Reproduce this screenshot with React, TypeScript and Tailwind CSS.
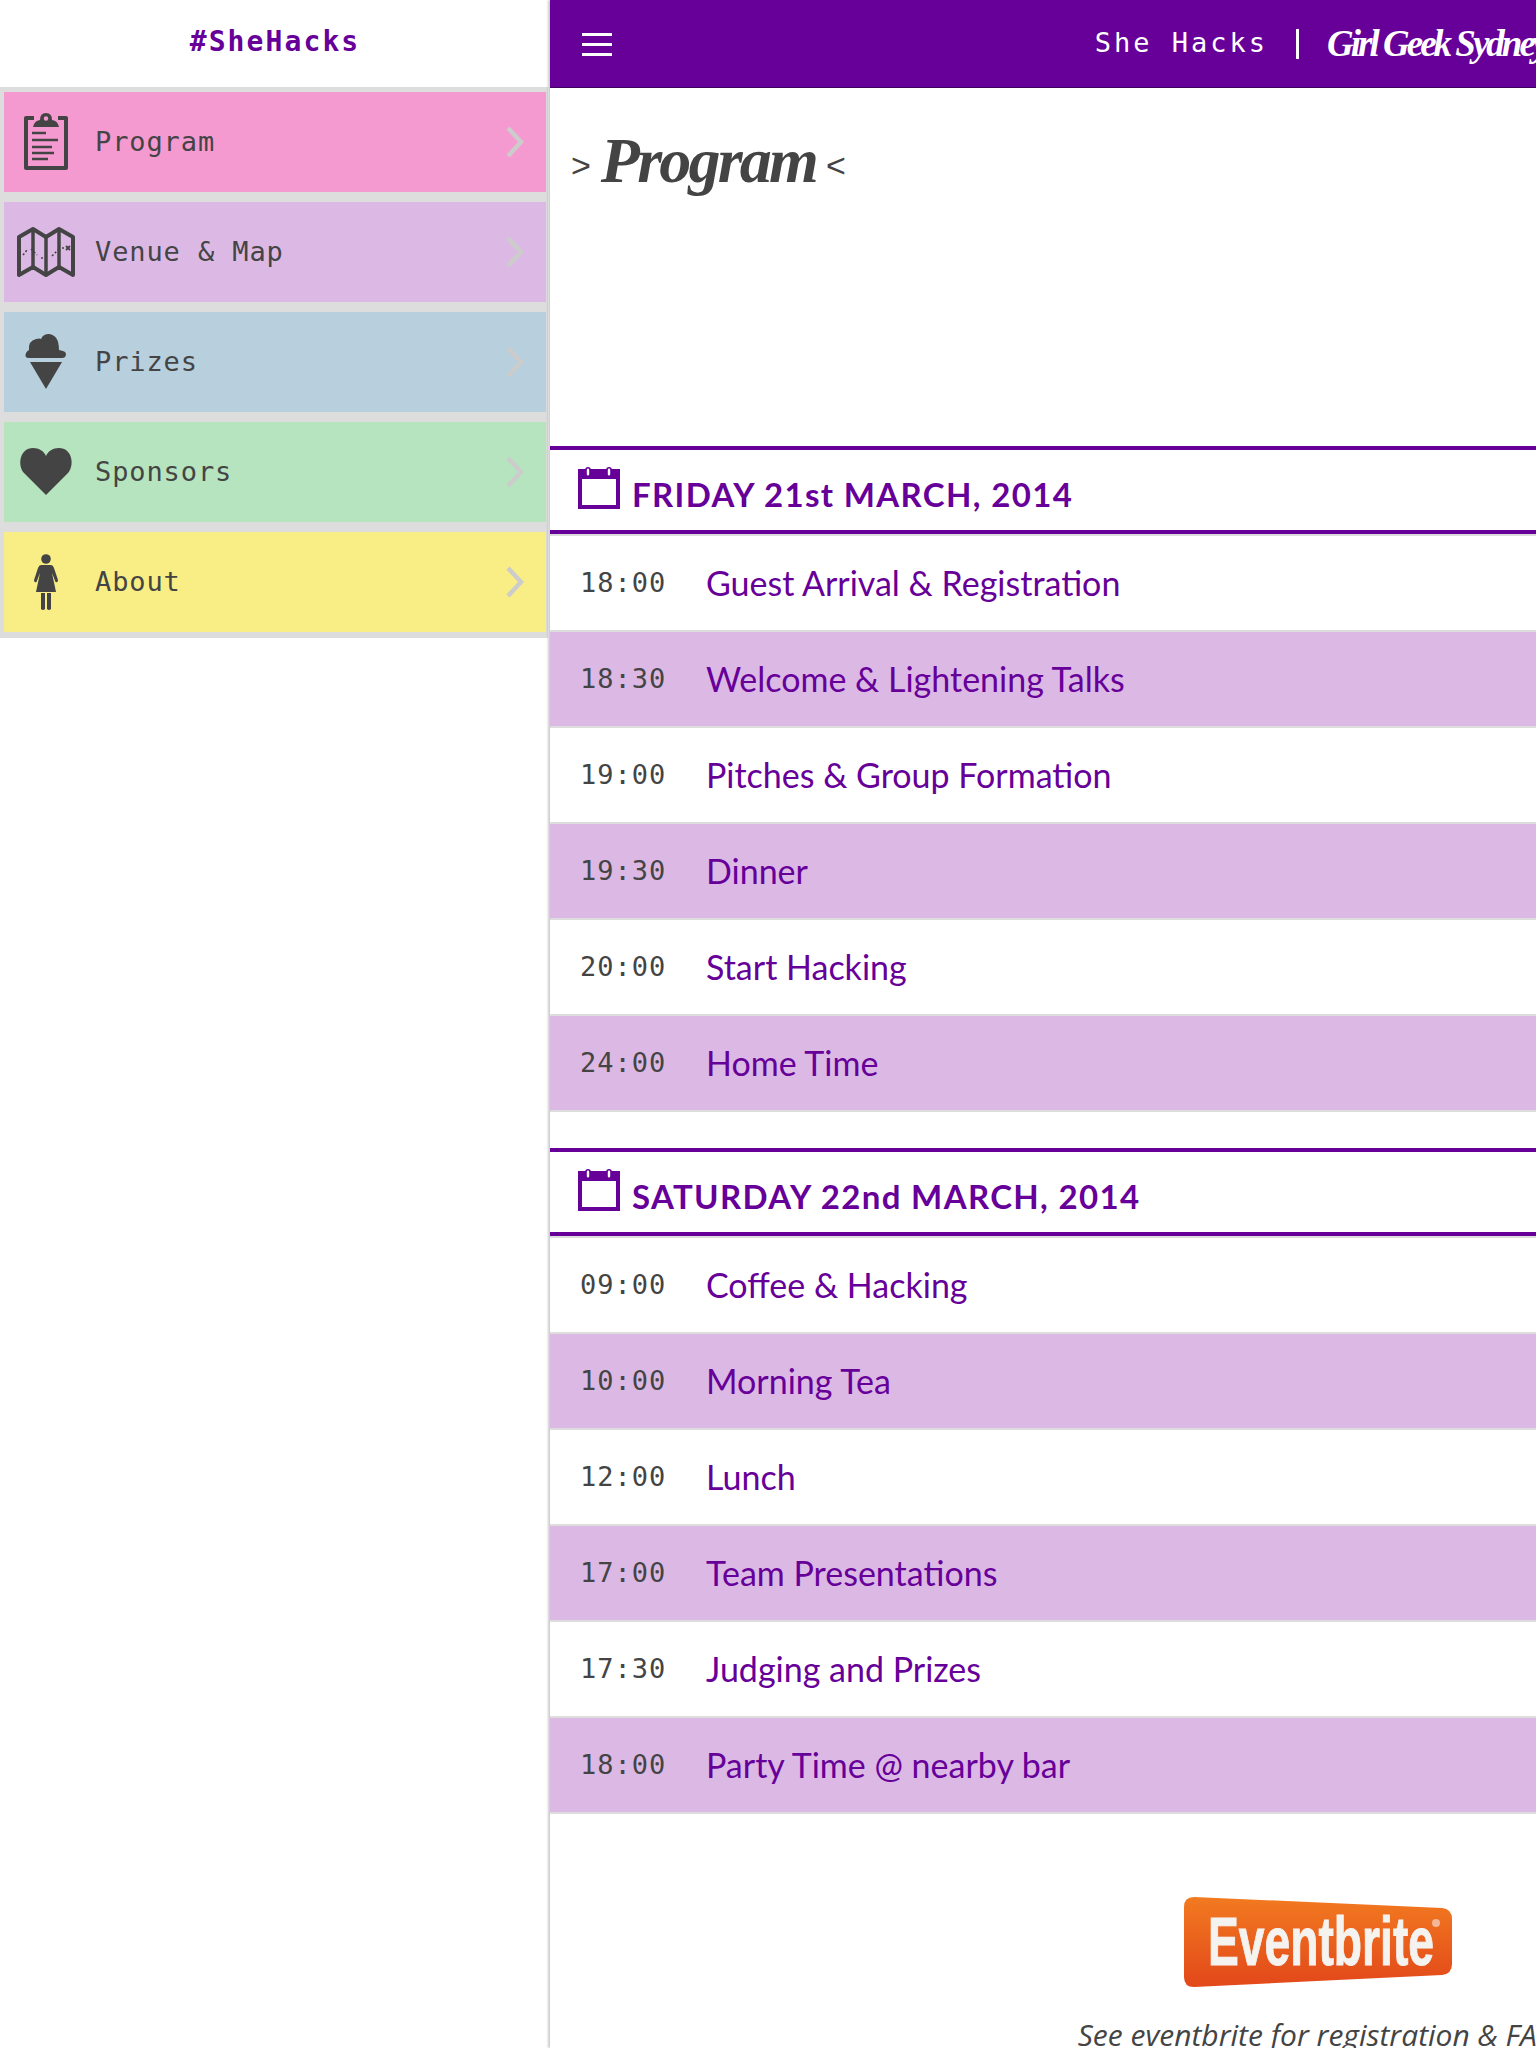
const MONO = "font-['DejaVu_Sans_Mono',monospace]";

const friday = [
    ['18:00', 'Guest Arrival & Registration'],
    ['18:30', 'Welcome & Lightening Talks'],
    ['19:00', 'Pitches & Group Formation'],
    ['19:30', 'Dinner'],
    ['20:00', 'Start Hacking'],
    ['24:00', 'Home Time'],
];

const saturday = [
    ['09:00', 'Coffee & Hacking'],
    ['10:00', 'Morning Tea'],
    ['12:00', 'Lunch'],
    ['17:00', 'Team Presentations'],
    ['17:30', 'Judging and Prizes'],
    ['18:00', 'Party Time @ nearby bar'],
];

function ClipboardIcon() {
    return (
        <svg width="64" height="64" viewBox="0 0 64 64" fill="none" stroke="#444" strokeWidth="2.4">
            <path d="M20 8 H12 V58 H52 V8 H44" strokeWidth="4" strokeLinejoin="round" />
            <path d="M19 17 Q20 11 26 10 Q26 3 32 3 Q38 3 38 10 Q44 11 45 17 Z" fill="#444" stroke="none" />
            <circle cx="32" cy="8.5" r="2.2" fill="#f49ad1" stroke="none" />
            <path d="M18 23 H32 M18 30 H44 M18 37 H38 M18 43 H40 M18 49 H34" />
        </svg>
    );
}

function MapIcon() {
    return (
        <svg width="64" height="64" viewBox="0 0 64 64" fill="none" stroke="#444" strokeWidth="4" strokeLinejoin="round">
            <path d="M5 17 L19 9 L32 17 L45 9 L59 17 V55 L45 47 L32 55 L19 47 L5 55 Z" />
            <path d="M19 9 V47 M32 17 V55 M45 9 V47" strokeWidth="3.5" />
            <path d="M9 35 L13 30 M17 29 L23 35 M27 38 H35 M38 36 L44 30 M48 28 H51" strokeWidth="1.6" strokeDasharray="2 2" />
            <path d="M52 26 L56 30 M56 26 L52 30" strokeWidth="1.8" />
        </svg>
    );
}

function ConeIcon() {
    return (
        <svg width="64" height="64" viewBox="0 0 64 64" fill="#444">
            <path d="M16 32 H48 L32 59 Z" />
            <path d="M15 28 Q10 28 12 23 Q13 21 15 20 Q14 11 22 9 Q26 8 27 9 Q29 4 35 4 Q45 5 45 20 Q52 21 52 24 Q52 28 48 28 Z" />
        </svg>
    );
}

function HeartIcon() {
    return (
        <svg width="64" height="64" viewBox="0 0 64 64" fill="#444">
            <path d="M32 55 L10 33 C3 25 6 8 19 8 C25 8 30 11 32 16 C34 11 39 8 45 8 C58 8 61 25 54 33 Z" />
        </svg>
    );
}

function WomanIcon() {
    return (
        <svg width="64" height="64" viewBox="0 0 64 64" fill="#444">
            <circle cx="32" cy="9" r="4.8" />
            <path d="M27 15 H37 Q39 15 40 18 L44 30 Q44 33 41.5 32 L38 23 L42 42 H22 L26 23 L22.5 32 Q20 33 20 30 L24 18 Q25 15 27 15 Z" />
            <path d="M27 43 H31 V59 Q29 61 27 59 Z M33 43 H37 V59 Q35 61 33 59 Z" />
        </svg>
    );
}

function CalendarIcon() {
    return (
        <svg width="42" height="42" viewBox="0 0 42 42" className="mt-[-5px] shrink-0">
            <path d="M0 2 H42 V42 H0 Z M4 12 V38 H38 V12 Z" fill="#660099" fillRule="evenodd" />
            <rect x="8" y="0.8" width="4" height="8.4" rx="2" fill="white" stroke="#660099" strokeWidth="1.6" />
            <rect x="29" y="0.8" width="4" height="8.4" rx="2" fill="white" stroke="#660099" strokeWidth="1.6" />
        </svg>
    );
}

function NavItem({ label, color, icon }: { label: string; color: string; icon: React.ReactNode }) {
    return (
        <a className={`flex h-[100px] items-center pl-[10px] pr-[22px] ${color}`}>
            <span className="w-[64px] shrink-0">{icon}</span>
            <span className={`ml-[17px] text-[27px] tracking-[0.9px] text-[#444] ${MONO}`}>{label}</span>
            <svg width="18" height="32" viewBox="0 0 18 32" fill="none" stroke="#cccccc" strokeWidth="4.5" className="ml-auto">
                <path d="M2 2 L15 16 L2 30" />
            </svg>
        </a>
    );
}

function Day({ title, rows }: { title: string; rows: string[][] }) {
    return (
        <section>
            <h2 className="flex h-[88px] items-center gap-3 border-y-4 border-[#660099] pl-7 font-['Lato',sans-serif] text-[33px] font-bold tracking-[1.35px] text-[#660099]">
                <CalendarIcon />
                <span className="mt-[10px]">{title}</span>
            </h2>
            <ul className="border-t-2 border-[#dddddd]">
                {rows.map(([time, name], i) => (
                    <li key={time + name} className={`flex h-[96px] items-center border-b-2 border-[#dddddd] ${i % 2 === 1 ? 'bg-[#dcb9e4]' : 'bg-white'}`}>
                        <span className={`ml-[30px] w-[126px] text-[27px] tracking-[1px] text-[#444] ${MONO}`}>{time}</span>
                        <span className="pb-[2px] font-['Lato',sans-serif] text-[34px] text-[#660099]">{name}</span>
                    </li>
                ))}
            </ul>
        </section>
    );
}

export default function App() {
    return (
        <div className="flex h-[2048px] w-[1536px] overflow-hidden bg-white">
            <aside className="w-[550px] shrink-0">
                <div className={`flex h-[87px] items-center justify-center pb-1 text-[28px] font-bold tracking-[2.1px] text-[#660099] ${MONO}`}>#SheHacks</div>
                <nav className="mr-[2px] flex flex-col gap-[10px] bg-[#dddddd] px-[2px] pt-[5px] pb-[6px] pl-1">
                    <NavItem label="Program" color="bg-[#f49ad1]" icon={<ClipboardIcon />} />
                    <NavItem label="Venue & Map" color="bg-[#dcb9e4]" icon={<MapIcon />} />
                    <NavItem label="Prizes" color="bg-[#b8cfdd]" icon={<ConeIcon />} />
                    <NavItem label="Sponsors" color="bg-[#b6e4bf]" icon={<HeartIcon />} />
                    <NavItem label="About" color="bg-[#f9ee85]" icon={<WomanIcon />} />
                </nav>
            </aside>

            <main className="relative w-[1536px] shrink-0 shadow-[-2px_0_2px_rgba(0,0,0,0.2)]">
                <header className="relative flex h-[88px] items-center justify-center border-b border-[#3d005c] bg-[#660099] pl-[5px] text-white">
                    <span className="absolute top-[33px] left-[32px] flex w-[30px] flex-col gap-[7px]">
                        <span className="h-[3px] bg-white" />
                        <span className="h-[3px] bg-white" />
                        <span className="h-[3px] bg-white" />
                    </span>
                    <div className="flex items-center whitespace-nowrap">
                        <span className={`text-[27px] tracking-[3px] ${MONO}`}>She Hacks</span>
                        <span className="mx-[28px] h-[30px] w-[3px] bg-white" />
                        <span className="font-['Liberation_Serif',serif] text-[37px] font-bold tracking-[-3px] italic">Girl Geek Sydney</span>
                    </div>
                </header>

                <div className="flex h-[358px] items-start pt-[37px] pl-[21px] text-[#444]">
                    <h1 className="flex items-center gap-[10px] font-['Liberation_Sans',sans-serif] text-[34px]">
                        <span className="mt-[8px]">&gt;</span>
                        <span className="font-['Liberation_Serif',serif] text-[64px] leading-[72px] font-bold tracking-[-2.8px] italic">Program</span>
                        <span className="mt-[8px]">&lt;</span>
                    </h1>
                </div>

                <Day title="FRIDAY 21st MARCH, 2014" rows={friday} />
                <div className="h-[36px]" />
                <Day title="SATURDAY 22nd MARCH, 2014" rows={saturday} />

                <div className="flex flex-col items-center pt-[83px]">
                    <svg width="268" height="90" viewBox="0 0 268 90" className="block">
                        <defs>
                            <linearGradient id="eb" x1="0" y1="0" x2="0" y2="1">
                                <stop offset="0" stopColor="#f27a20" />
                                <stop offset="1" stopColor="#e2481a" />
                            </linearGradient>
                        </defs>
                        <path d="M10 0 L258 11 Q268 12 268 22 V67 Q268 77 258 78 L10 90 Q0 90 0 80 V10 Q0 0 10 0 Z" fill="url(#eb)" />
                        <text x="24" y="68" textLength="226" lengthAdjust="spacingAndGlyphs" fill="#f5f3f0" stroke="#f5f3f0" strokeWidth="1" fontFamily="Liberation Sans" fontWeight="700" fontSize="68">Eventbrite</text>
                        <circle cx="252" cy="26" r="4" fill="#f3b79a" />
                    </svg>
                    <p className="mt-[28px] font-['Open_Sans',sans-serif] text-[30px] leading-[40px] whitespace-nowrap text-[#444] italic">See eventbrite for registration &amp; FAQ</p>
                </div>
            </main>
        </div>
    );
}
